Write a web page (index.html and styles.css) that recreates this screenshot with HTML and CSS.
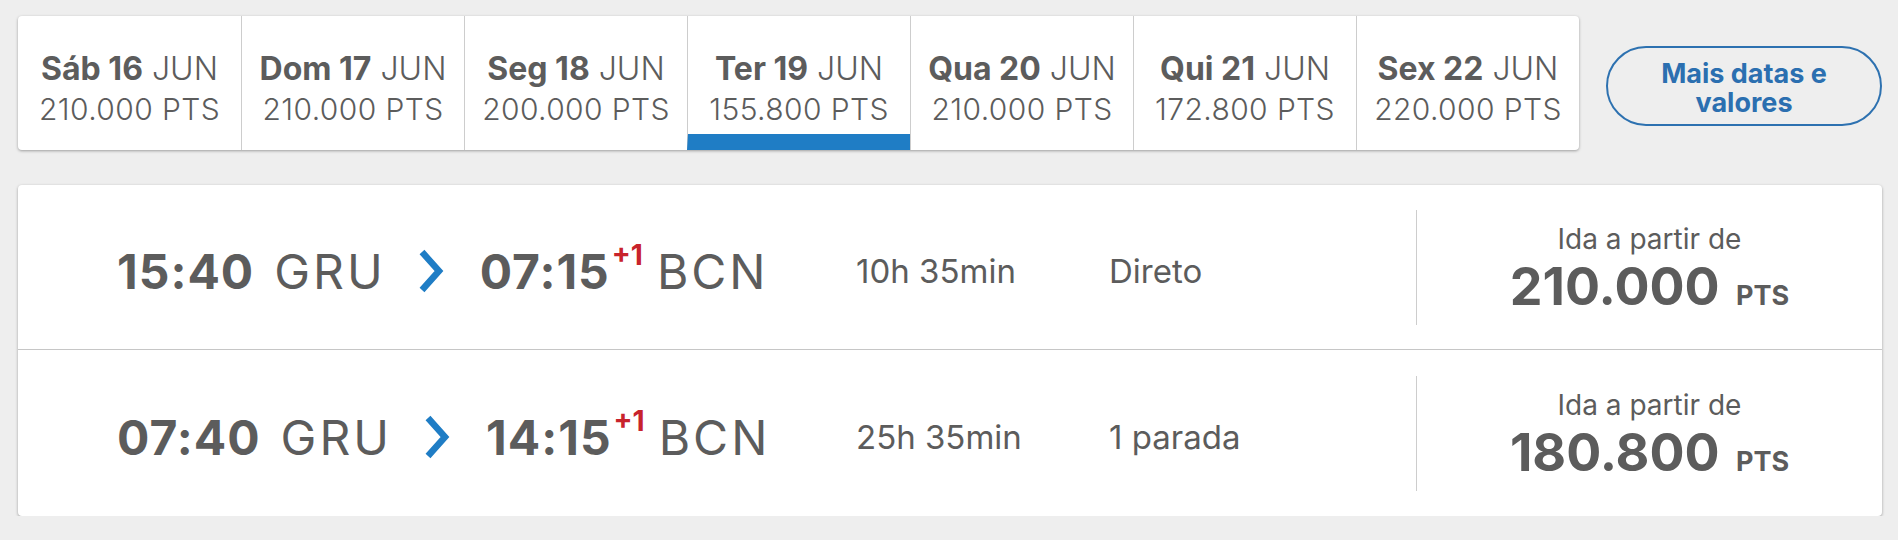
FILE: index.html
```html
<!DOCTYPE html>
<html lang="pt-br">
<head>
  <meta charset="UTF-8">
  <title>Voos GRU - BCN</title>
  <link rel="stylesheet" href="styles.css">
</head>
<body>
  <div class="datas">
    <ul class="abas">
      <li class="aba"><div class="dia"><b>Sáb 16</b> <span>JUN</span></div><div class="pts">210.000 PTS</div></li>
      <li class="aba"><div class="dia"><b>Dom 17</b> <span>JUN</span></div><div class="pts">210.000 PTS</div></li>
      <li class="aba"><div class="dia"><b>Seg 18</b> <span>JUN</span></div><div class="pts">200.000 PTS</div></li>
      <li class="aba ativa"><div class="dia"><b>Ter 19</b> <span>JUN</span></div><div class="pts">155.800 PTS</div></li>
      <li class="aba"><div class="dia"><b>Qua 20</b> <span>JUN</span></div><div class="pts">210.000 PTS</div></li>
      <li class="aba"><div class="dia"><b>Qui 21</b> <span>JUN</span></div><div class="pts">172.800 PTS</div></li>
      <li class="aba"><div class="dia"><b>Sex 22</b> <span>JUN</span></div><div class="pts">220.000 PTS</div></li>
    </ul>
    <button class="mais">Mais datas e<br>valores</button>
  </div>

  <div class="voos">
    <div class="voo">
      <div class="rota">
        <span class="hora">15:40</span>
        <span class="aero">GRU</span>
        <svg class="seta" width="26" height="44" viewBox="0 0 26 44"><polyline points="4,3 21,22 4,41" /></svg>
        <span class="hora">07:15<sup class="mais-um">+1</sup></span>
        <span class="aero">BCN</span>
      </div>
      <div class="duracao">10h 35min</div>
      <div class="paradas">Direto</div>
      <div class="preco">
        <div class="rotulo">Ida a partir de</div>
        <div class="valor">210.000 <span>PTS</span></div>
      </div>
    </div>

    <div class="voo">
      <div class="rota">
        <span class="hora">07:40</span>
        <span class="aero">GRU</span>
        <svg class="seta" width="26" height="44" viewBox="0 0 26 44"><polyline points="4,3 21,22 4,41" /></svg>
        <span class="hora">14:15<sup class="mais-um">+1</sup></span>
        <span class="aero">BCN</span>
      </div>
      <div class="duracao">25h 35min</div>
      <div class="paradas">1 parada</div>
      <div class="preco">
        <div class="rotulo">Ida a partir de</div>
        <div class="valor">180.800 <span>PTS</span></div>
      </div>
    </div>
  </div>
</body>
</html>
```

FILE: styles.css
```css
* {
  box-sizing: border-box;
}

body {
  margin: 0;
  padding: 16px 16px 0 18px;
  background: #eeeeee;
  font-family: Inter, "Liberation Sans", sans-serif;
  color: #5c5c5c;
}

.datas {
  display: flex;
  align-items: center;
}

.abas {
  display: flex;
  list-style: none;
  margin: 0;
  padding: 0;
  height: 134px;
  background: white;
  border-radius: 4px;
  box-shadow: 0 1px 3px rgba(0,0,0,0.35);
}

.aba {
  flex: 0 0 223px;
  padding-top: 33px;
  text-align: center;
  border-left: 1px solid #cdcdcd;
}

.aba:first-child {
  border-left: none;
}

.aba.ativa {
  border-bottom: 16px solid #1f7dc5;
}

.dia {
  font-size: 32px;
  line-height: 40px;
  font-weight: 300;
}

.dia b {
  font-weight: 700;
}

.pts {
  margin-top: 1px;
  font-size: 30px;
  line-height: 38px;
  font-weight: 300;
  letter-spacing: 0.4px;
}

.mais {
  margin: 6px 0 0 27px;
  width: 276px;
  height: 80px;
  background: transparent;
  border: 2px solid #2d71b0;
  border-radius: 40px;
  color: #2b6fb0;
  font-family: inherit;
  font-size: 27px;
  line-height: 29px;
  font-weight: 700;
  padding-top: 4px;
}

.voos {
  margin-top: 35px;
  background: white;
  border-radius: 4px;
  box-shadow: 0 1px 3px rgba(0,0,0,0.35);
}

.voo {
  display: flex;
  align-items: center;
  height: 164px;
}

.voo + .voo {
  height: 167px;
  border-top: 1px solid #c6c6c6;
}

.rota,
.duracao,
.paradas {
  padding-top: 8px;
}

.rota {
  flex: 0 0 838px;
  padding-left: 99px;
  display: flex;
  align-items: center;
  font-size: 48px;
  white-space: nowrap;
}

.hora {
  font-weight: 700;
  letter-spacing: 1px;
}

.aero {
  font-weight: 400;
  letter-spacing: 3px;
  margin-left: 20px;
}

.seta {
  margin: 0 36px 0 32px;
  fill: none;
  stroke: #1f7dc5;
  stroke-width: 6.5;
}

.mais-um {
  font-size: 28px;
  line-height: 0;
  color: #c8232c;
  vertical-align: 24px;
  margin: 0 -6px 0 2px;
  letter-spacing: 0;
}

.duracao {
  flex: 0 0 253px;
  font-size: 33px;
}

.paradas {
  flex: 1;
  font-size: 33px;
}

.preco {
  flex: 0 0 466px;
  height: 115px;
  border-left: 1px solid #cdcdcd;
  text-align: center;
  padding-top: 12px;
}

.rotulo {
  font-size: 28px;
  line-height: 34px;
}

.valor {
  font-size: 52px;
  line-height: 62px;
  font-weight: 700;
}

.valor span {
  font-size: 27px;
  margin-left: 4px;
}
```
